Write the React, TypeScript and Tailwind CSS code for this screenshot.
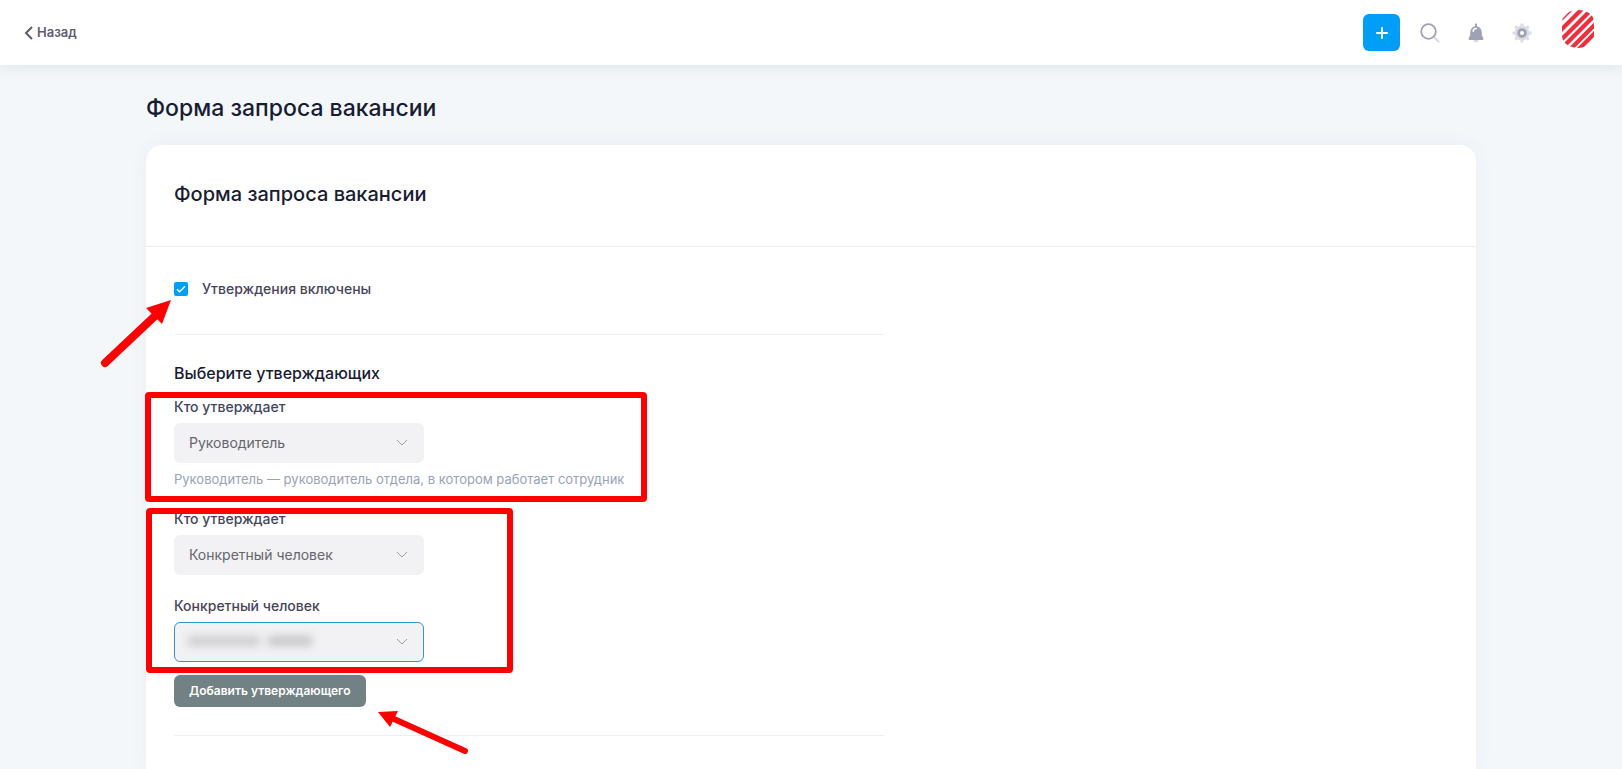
import { useState } from "react";
import type { ReactNode } from "react";

interface ApproverSelectProps {
    id: string;
    label: string;
    options: string[];
    active?: boolean;
    children?: ReactNode;
}

function ApproverSelect({ id, label, options, active, children }: ApproverSelectProps) {
    return (
        <div className="w-[250px]">
            <label htmlFor={id} className="block text-sm font-medium leading-5 text-[#46445a]">
                {label}
            </label>
            <div className="relative mt-1.5">
                <select
                    id={id}
                    className={`block h-10 w-full appearance-none rounded-md border bg-[#f2f2f5] px-3.5 text-sm text-[#65656b] outline-none ${active ? 'border-[#2f97d3]' : 'border-[#f2f2f5]'}`}
                >
                    {options.map((option) => (
                        <option key={option}>{option}</option>
                    ))}
                </select>
                {children}
                <svg viewBox="0 0 12 7" className="pointer-events-none absolute right-4 top-4 h-[7px] w-3" fill="none" stroke="#9b9ba3">
                    <path d="M1 1l5 5 5-5" />
                </svg>
            </div>
        </div>
    );
}

function Header() {
    return (
        <header className="relative z-10 flex h-[65px] items-center justify-between bg-white pl-6 pr-7 shadow-[0_0_16px_rgba(60,80,80,0.14)]">
            <a href="#" className="flex items-center gap-1 text-[13px] font-semibold text-[#5f5d70]">
                <svg viewBox="0 0 9 14" className="h-3.5 w-[9px]" fill="none" stroke="currentColor" strokeWidth="2">
                    <path d="M8 1L2 7l6 6" />
                </svg>
                Назад
            </a>
            <div className="flex items-center">
                <button aria-label="Добавить" className="flex size-[37px] items-center justify-center rounded-md bg-[#009ef7]">
                    <svg viewBox="0 0 12 12" className="size-3" stroke="#fff" strokeWidth="2" strokeLinecap="round">
                        <path d="M6 1v10M1 6h10" />
                    </svg>
                </button>
                <button aria-label="Поиск" className="ml-5">
                    <svg viewBox="0 0 20 20" className="size-5" fill="none">
                        <path d="M14 14l4.500 4.500" stroke="#d9d9e3" strokeWidth="2.200" strokeLinecap="round" />
                        <circle cx="8.500" cy="8.500" r="7.300" stroke="#a1a1b5" strokeWidth="1.800" />
                    </svg>
                </button>
                <button aria-label="Уведомления" className="ml-[26px]">
                    <svg viewBox="0 0 20 20" className="size-5">
                        <circle cx="10" cy="17" r="2.500" fill="#d9d9e3" />
                        <path d="M10 .5c.7 0 1 .5 1 1v1.800c2.900.6 4.500 2.800 4.700 5.700l.3 4 1.200 1.500V17H2.800v-2.500L4 13l.3-4C4.500 6.100 6.100 3.900 9 3.300V1.500c0-.5.3-1 1-1z" fill="#a1a1b5" />
                        <path d="M10.300 5.500c-1.900 0-3 1.100-3.100 3" stroke="#fff" fill="none" strokeWidth="1.500" strokeLinecap="round" />
                    </svg>
                </button>
                <button aria-label="Настройки" className="ml-[26px]">
                    <svg viewBox="0 0 20 20" className="size-5">
                        <circle cx="10" cy="10" r="7.500" fill="#dcdce6" />
                        <path d="M10 .5v19M.5 10h19M3.300 3.300l13.400 13.400M16.700 3.300L3.300 16.700" stroke="#dcdce6" strokeWidth="3" />
                        <circle cx="10" cy="10" r="3.400" fill="#fff" stroke="#a1a1b5" strokeWidth="2.800" />
                    </svg>
                </button>
                <button aria-label="Профиль" className="mb-2 ml-[30px]">
                    <svg viewBox="0 0 32 38" className="h-[38px] w-8">
                        <defs>
                            <clipPath id="avatar">
                                <path d="M16 0c8 0 16 4 16 12v14c0 7-8 12-16 12S0 33 0 26V12C0 4 8 0 16 0z" />
                            </clipPath>
                        </defs>
                        <g clipPath="url(#avatar)" stroke="#ee2f3b" strokeWidth="4.200">
                            <path d="M-4 23L23-4M-4 33L33-4M-4 42L36 2M-4 51.500L36 11.500M-4 60L36 20" />
                            <path d="M0 10L10 0" strokeWidth="1.500" />
                        </g>
                    </svg>
                </button>
            </div>
        </header>
    );
}

// Highlight frames and arrows drawn over the form
function Highlights() {
    return (
        <svg className="pointer-events-none absolute left-0 top-0 h-full w-full overflow-visible" fill="none" stroke="#f00">
            <rect x="2" y="250" width="496" height="104" rx="1" strokeWidth="6" />
            <rect x="3" y="366" width="361" height="159" rx="1" strokeWidth="6" />
            <path d="M-41 218L10 170" strokeWidth="8" strokeLinecap="round" />
            <path d="M25 155L0 163l16 16z" fill="#f00" stroke="none" />
            <path d="M319 606L248 574" strokeWidth="6" strokeLinecap="round" />
            <path d="M232 567l20-1-8 16z" fill="#f00" stroke="none" />
        </svg>
    );
}

export default function App() {
    const [enabled, setEnabled] = useState(true);

    return (
        <div className="flex min-h-screen flex-col bg-[#f3f7fa] font-['Inter','Liberation_Sans',sans-serif]">
            <Header />
            <main className="mx-auto flex w-full max-w-[1330px] flex-1 flex-col pt-[27px]">
                <h1 className="text-[23px] font-medium leading-8 text-[#181c32]">Форма запроса вакансии</h1>
                <section className="relative mt-[21px] flex-1 rounded-t-2xl bg-white shadow-[0_0_20px_rgba(70,80,110,0.05)]">
                    <div className="flex h-[102px] items-center border-b border-[#ebedf0] px-7 pb-1">
                        <h2 className="text-xl font-medium text-[#181c32]">Форма запроса вакансии</h2>
                    </div>
                    <form className="ml-7 max-w-[710px]">
                        <div className="flex h-[88px] items-center border-b border-[#eeeff1] pb-1">
                            <label className="flex items-center gap-3.5 text-sm font-medium text-[#46445a]">
                                <span className="relative flex">
                                    <input
                                        type="checkbox"
                                        checked={enabled}
                                        onChange={(e) => setEnabled(e.target.checked)}
                                        className="peer size-3.5 appearance-none rounded-xs bg-gray-200 checked:bg-[#009ef7]"
                                    />
                                    <svg viewBox="0 0 14 14" className="pointer-events-none absolute inset-0 hidden size-3.5 peer-checked:block" fill="none" stroke="#fff" strokeWidth="1.300">
                                        <path d="M3 7.200l2.600 2.600L11 4.300" />
                                    </svg>
                                </span>
                                Утверждения включены
                            </label>
                        </div>
                        <div className="border-b border-[#eeeff1] pb-7 pt-[26px]">
                            <h3 className="text-base font-medium leading-6 text-[#181c32]">Выберите утверждающих</h3>
                            <div className="mt-3">
                                <ApproverSelect id="manager" label="Кто утверждает" options={['Руководитель', 'Конкретный человек']} />
                                <p className="mt-1.5 text-[13px] leading-5 text-[#9aa2b8]">
                                    Руководитель — руководитель отдела, в котором работает сотрудник
                                </p>
                            </div>
                            <div className="mt-5 space-y-[21px]">
                                <ApproverSelect id="type" label="Кто утверждает" options={['Конкретный человек', 'Руководитель']} />
                                <ApproverSelect id="person" label="Конкретный человек" options={['']} active>
                                    <div className="pointer-events-none absolute left-3.5 top-3.5 flex gap-2 blur-xs">
                                        <span className="h-2.5 w-[72px] bg-[#cdcdd0]" />
                                        <span className="h-2.5 w-11 bg-[#c5c5c8]" />
                                    </div>
                                </ApproverSelect>
                            </div>
                            <button type="button" className="mt-[13px] block h-8 rounded-md bg-[#728284] px-[15px] text-xs font-semibold text-white">
                                Добавить утверждающего
                            </button>
                        </div>
                    </form>
                    <Highlights />
                </section>
            </main>
        </div>
    );
}
